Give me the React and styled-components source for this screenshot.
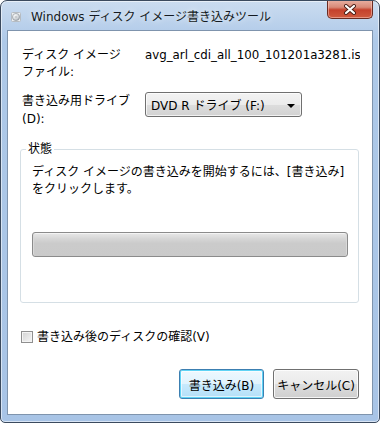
import styled, { createGlobalStyle } from "styled-components"

const GlobalStyle = createGlobalStyle`
  html, body {
    margin: 0;
    padding: 0;
    background: #ffffff;
  }
  body {
    font-family: "DejaVu Sans", "Noto Sans CJK JP", sans-serif;
    font-size: 12px;
    color: #000;
  }
`

function DiscIcon() {
  return (
    <svg width="10" height="10" viewBox="0 0 10 10">
      <defs>
        <radialGradient id="disc" cx="40%" cy="35%" r="70%">
          <stop offset="0" stopColor="#ffffff" />
          <stop offset="0.6" stopColor="#d4d8dc" />
          <stop offset="1" stopColor="#9aa1a8" />
        </radialGradient>
      </defs>
      <rect x="0.5" y="0.5" width="9" height="9" rx="1" fill="#eef0f2" stroke="#b6bcc2" />
      <circle cx="5" cy="5" r="3.6" fill="url(#disc)" stroke="#8d959c" strokeWidth="0.6" />
      <circle cx="5" cy="5" r="0.9" fill="#ffffff" stroke="#8d959c" strokeWidth="0.5" />
    </svg>
  )
}

function CloseGlyph() {
  return (
    <svg width="14" height="11" viewBox="0 0 14 11">
      <path d="M3 2 L11 9 M11 2 L3 9" stroke="#4a1e17" strokeWidth="4" strokeLinecap="round" />
      <path d="M3 2 L11 9 M11 2 L3 9" stroke="#ffffff" strokeWidth="2.2" strokeLinecap="round" />
    </svg>
  )
}

function App() {
  return (
    <>
      <GlobalStyle />
      <Window>
        <TitleBar>
          <TitleIcon><DiscIcon /></TitleIcon>
          <Title>Windows ディスク イメージ書き込みツール</Title>
          <CloseButton><CloseGlyph /></CloseButton>
        </TitleBar>
        <Client>
          <FormGrid>
            <Label>ディスク イメージ<br />ファイル:</Label>
            <FileValue>avg_arl_cdi_all_100_101201a3281.iso</FileValue>
            <Label $lh={18}>書き込み用ドライブ<br />(D):</Label>
            <Select>
              <span>DVD R ドライブ (F:)</span>
              <Arrow />
            </Select>
          </FormGrid>
          <GroupBox>
            <Legend>状態</Legend>
            <GroupBody>
              <Message>
                <Line>ディスク イメージの書き込みを開始するには、[書き込み]</Line>
                <Line>をクリックします。</Line>
              </Message>
              <Progress />
            </GroupBody>
          </GroupBox>
          <CheckRow>
            <CheckBox />
            <span>書き込み後のディスクの確認(V)</span>
          </CheckRow>
          <ButtonRow>
            <Button $primary>書き込み(B)</Button>
            <Button>キャンセル(C)</Button>
          </ButtonRow>
        </Client>
      </Window>
    </>
  )
}

export default App

const Window = styled.div`
  box-sizing: border-box;
  width: 380px;
  height: 423px;
  display: flex;
  flex-direction: column;
  border: 1px solid #3b4a5e;
  border-radius: 7px 7px 5px 5px;
  background: linear-gradient(180deg, #cbdcf0 0px, #bcd2ec 20px, #aec9e8 40px, #a8c4e6 100%);
  box-shadow: inset 0 0 0 1px rgba(255, 255, 255, 0.55);
  overflow: hidden;
`

const TitleBar = styled.div`
  height: 29px;
  display: flex;
  align-items: center;
  padding-left: 10px;
  flex-shrink: 0;
`

const TitleIcon = styled.div`
  width: 10px;
  height: 10px;
  display: flex;
  margin-top: 2px;
`

const Title = styled.div`
  margin-left: 10px;
  font-size: 12px;
  color: #141a22;
  white-space: nowrap;
  text-shadow: 0 0 6px rgba(255, 255, 255, 0.9);
`

const CloseButton = styled.div`
  align-self: flex-start;
  margin-left: auto;
  margin-right: 6px;
  margin-top: -1px;
  width: 46px;
  height: 19px;
  box-sizing: border-box;
  border: 1px solid #6a2b22;
  border-top: none;
  border-radius: 0 0 5px 5px;
  background: linear-gradient(180deg, #e9b1a4 0%, #d88a78 40%, #c5412c 55%, #cf5a3f 100%);
  box-shadow: inset 0 0 0 1px rgba(255, 210, 200, 0.5);
  display: flex;
  align-items: center;
  justify-content: center;
`

const Client = styled.div`
  flex: 1;
  margin: 0 6px 7px 6px;
  background: #ffffff;
  border: 1px solid #7f94ad;
  display: flex;
  flex-direction: column;
  min-height: 0;
`

const FormGrid = styled.div`
  display: grid;
  grid-template-columns: 123px 1fr;
  row-gap: 11px;
  padding: 16px 12px 0 14px;
`

const Label = styled.div`
  line-height: ${({ $lh }) => $lh || 17}px;
  white-space: nowrap;
`

const FileValue = styled.div`
  line-height: 17px;
  font-size: 11.8px;
  white-space: nowrap;
  overflow: hidden;
`

const Select = styled.div`
  box-sizing: border-box;
  width: 157px;
  height: 25px;
  display: flex;
  align-items: center;
  justify-content: space-between;
  padding: 0 6px 0 5px;
  border: 1px solid #707070;
  border-radius: 3px;
  background: linear-gradient(180deg, #f3f3f3 0%, #ebebeb 50%, #dddddd 51%, #d2d2d2 100%);
  box-shadow: inset 0 0 0 1px rgba(255, 255, 255, 0.7);
  white-space: nowrap;
`

const Arrow = styled.span`
  width: 0;
  height: 0;
  border-left: 4px solid transparent;
  border-right: 4px solid transparent;
  border-top: 4px solid #000;
  margin-top: 2px;
`

const GroupBox = styled.fieldset`
  margin: 13px 13px 0 12px;
  padding: 0;
  border: 1px solid #d5dfe5;
  border-radius: 3px;
  min-width: 0;
`

const Legend = styled.legend`
  margin-left: 5px;
  padding: 0 2px;
  font-size: 12px;
  line-height: 16px;
  color: #000;
`

const GroupBody = styled.div`
  padding: 7px 10px 45px 11px;
  display: flex;
  flex-direction: column;
`

const Message = styled.div`
  line-height: 17px;
`

const Line = styled.div`
  white-space: nowrap;
`

const Progress = styled.div`
  margin-top: 34px;
  height: 25px;
  box-sizing: border-box;
  border: 1px solid #8b8b8b;
  border-radius: 3px;
  background: linear-gradient(180deg, #e8e8e8 0%, #d6d6d6 25%, #cbcbcb 45%, #cacaca 100%);
  box-shadow: inset 1px 0 0 #dadada, inset -1px 0 0 #dadada, inset 0 1px 0 #f4f4f4;
`

const CheckRow = styled.div`
  display: flex;
  align-items: center;
  gap: 4px;
  padding-left: 13px;
  margin-top: 26px;
  line-height: 16px;
  white-space: nowrap;
`

const CheckBox = styled.span`
  box-sizing: border-box;
  width: 12px;
  height: 12px;
  border: 1px solid #8f8f8f;
  background: linear-gradient(135deg, #d2d2d2 0%, #e8e8e8 60%, #f6f6f6 100%);
  box-shadow: inset 0 0 0 1px #f4f4f4;
`

const ButtonRow = styled.div`
  margin-top: auto;
  display: flex;
  justify-content: flex-end;
  gap: 9px;
  padding: 0 13px 15px 0;
`

const Button = styled.div`
  box-sizing: border-box;
  width: ${({ $primary }) => ($primary ? 85 : 86)}px;
  height: 30px;
  display: flex;
  align-items: center;
  justify-content: center;
  border-radius: 3px;
  white-space: nowrap;
  border: 1px solid ${({ $primary }) => ($primary ? "#3c7fb1" : "#707070")};
  background: ${({ $primary }) =>
    $primary
      ? "linear-gradient(180deg, #eef8fe 0%, #e0f3fd 50%, #c8eafd 51%, #b3dff7 100%)"
      : "linear-gradient(180deg, #f2f2f2 0%, #ebebeb 50%, #dddddd 51%, #cfcfcf 100%)"};
  box-shadow: ${({ $primary }) =>
    $primary ? "inset 0 0 0 1px #5fd3f5, inset 0 0 0 2px rgba(255,255,255,0.6)" : "inset 0 0 0 1px rgba(255,255,255,0.8)"};
`
